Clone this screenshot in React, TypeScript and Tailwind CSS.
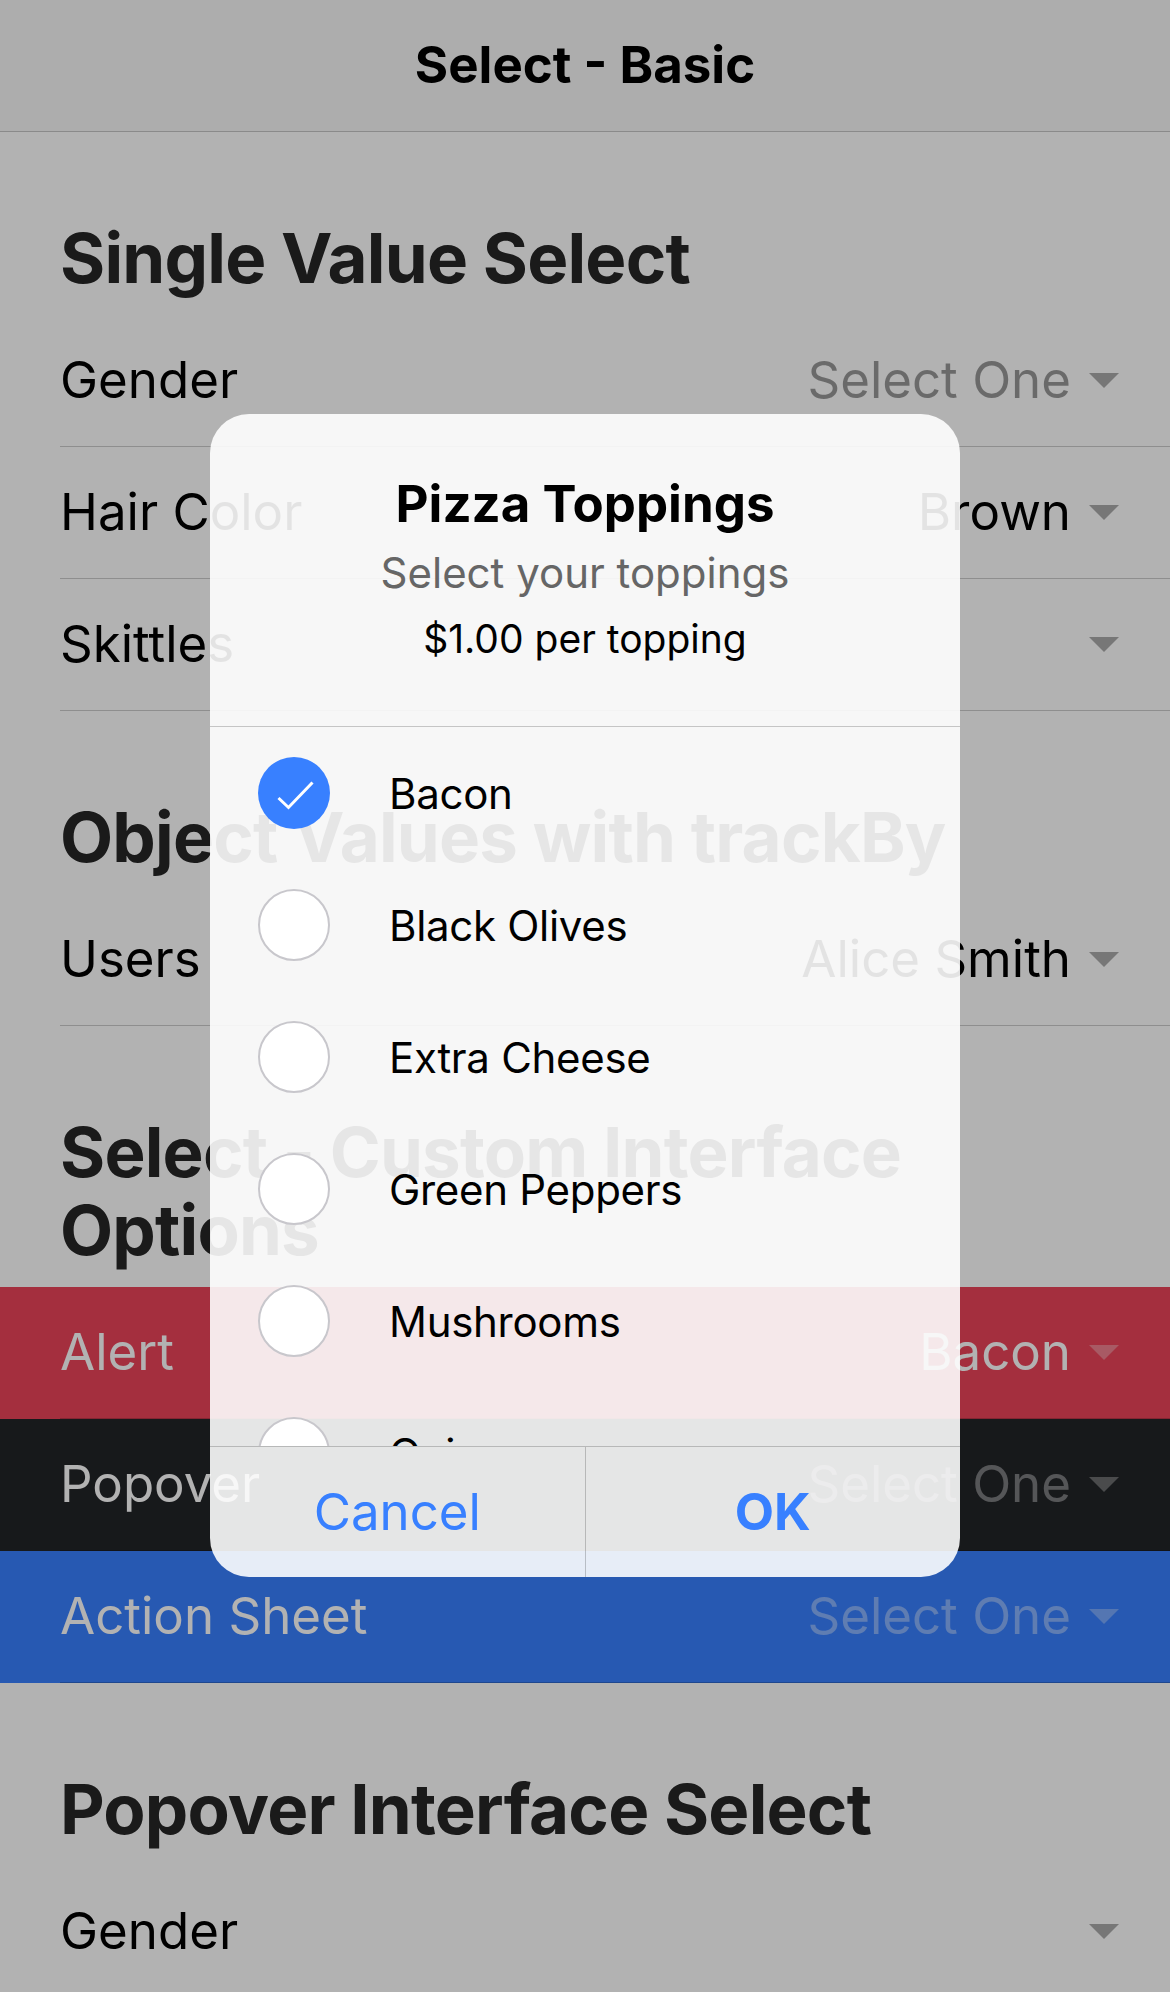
import React from "react";

type Row = {
  label: string;
  value?: string;
  tone?: "plain" | "danger" | "dark" | "primary";
};

const toneBg = {
  plain: "bg-white text-black",
  danger: "bg-[#eb445a] text-white",
  dark: "bg-[#222428] text-white",
  primary: "bg-[#3880ff] text-white",
};

const toppings = ["Bacon", "Black Olives", "Extra Cheese", "Green Peppers", "Mushrooms", "Onions"];

function ListHeader({ children }: { children: React.ReactNode }) {
  return (
    <div className="pl-[60px] pr-[48px] pt-[87px] pb-[18px] text-[69px] leading-[78px] font-bold tracking-[-0.8px] text-[#262626]">
      {children}
    </div>
  );
}

function SelectItem({ label, value, tone = "plain" }: Row) {
  return (
    <div className={`h-[132px] pl-[60px] ${toneBg[tone]}`}>
      <div className="flex h-full items-center border-b border-black/20 pr-[48px]">
        <span className="flex-1 text-[51px]">{label}</span>
        {value ? (
          <span className="text-[51px]">{value}</span>
        ) : value === undefined ? (
          <span className="text-[51px] opacity-40">Select One</span>
        ) : null}
        <div className="ml-[15px] flex w-[36px] justify-center opacity-[0.33]">
          <div className="h-0 w-0 border-x-[15px] border-t-[15px] border-x-transparent border-t-current" />
        </div>
      </div>
    </div>
  );
}

function Radio({ checked }: { checked: boolean }) {
  if (checked) {
    return (
      <div className="flex h-[72px] w-[72px] items-center justify-center rounded-full bg-[#3880ff]">
        <svg width="72" height="72" viewBox="0 0 72 72">
          <polyline points="20.5,41 30.5,50.5 54.5,25.5" fill="none" stroke="white" strokeWidth="3" />
        </svg>
      </div>
    );
  }
  return <div className="h-[72px] w-[72px] rounded-full border-2 border-[#c8c7cc] bg-white" />;
}

function ToppingsAlert() {
  return (
    <div className="absolute left-[210px] top-[414px] flex h-[1163px] w-[750px] flex-col overflow-hidden rounded-[39px] bg-white/[0.89]">
      <div className="h-[312px] px-[48px] pt-[60px] text-center">
        <div className="text-[51px] leading-[60px] font-bold text-black">Pizza Toppings</div>
        <div className="mt-[14px] text-[42px] leading-[50px] text-[#666]">Select your toppings</div>
        <div className="mt-[18px] text-[39px] leading-[46px] text-black">$1.00 per topping</div>
      </div>
      <div className="flex-1 overflow-hidden border-t border-black/20">
        {toppings.map((t, i) => (
          <div key={t} className="flex h-[132px] items-center pl-[48px]">
            <Radio checked={i === 0} />
            <span className="ml-[59px] text-[42px] tracking-[-0.3px] text-black">{t}</span>
          </div>
        ))}
      </div>
      <div className="flex h-[131px] border-t border-black/20 text-[51px] text-[#3880ff]">
        <button className="flex flex-1 items-center justify-center border-r border-black/20">Cancel</button>
        <button className="flex flex-1 items-center justify-center font-bold">OK</button>
      </div>
    </div>
  );
}

export default function App() {
  return (
    <div className="relative h-[1992px] w-[1170px] overflow-hidden bg-white font-[Inter,sans-serif]">
      <div className="flex h-[132px] items-center justify-center border-b border-black/20 bg-[#f8f8f8] text-[51px] font-bold text-black">
        Select - Basic
      </div>

      <ListHeader>Single Value Select</ListHeader>
      <SelectItem label="Gender" />
      <SelectItem label="Hair Color" value="Brown" />
      <SelectItem label="Skittles" value="" />

      <ListHeader>Object Values with trackBy</ListHeader>
      <SelectItem label="Users" value="Alice Smith" />

      <ListHeader>Select - Custom Interface Options</ListHeader>
      <SelectItem label="Alert" value="Bacon" tone="danger" />
      <SelectItem label="Popover" tone="dark" />
      <SelectItem label="Action Sheet" tone="primary" />

      <ListHeader>Popover Interface Select</ListHeader>
      <SelectItem label="Gender" value="" />

      <div className="absolute inset-0 bg-black/30" />
      <ToppingsAlert />
    </div>
  );
}
